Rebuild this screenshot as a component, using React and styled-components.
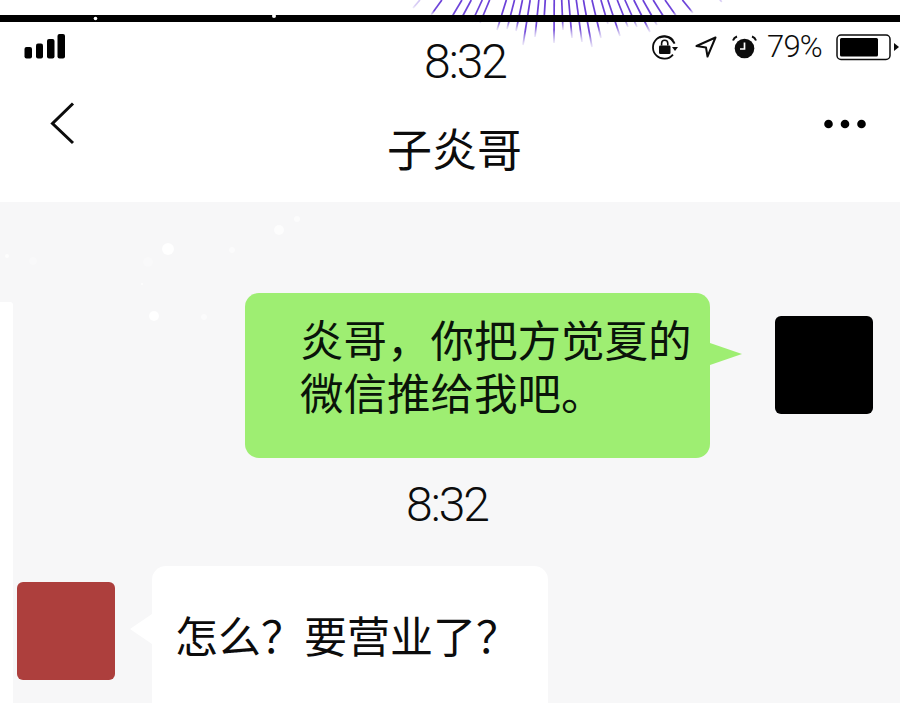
import React from "react";
import styled, { createGlobalStyle } from "styled-components";

const Global = createGlobalStyle`
  html, body { margin: 0; padding: 0; background: #fff; }
  #root { width: 900px; height: 703px; overflow: hidden; }
`;

const CJK = `"Noto Sans CJK SC", "Noto Sans", sans-serif`;
const LATIN = `Roboto, "Noto Sans", sans-serif`;

const Page = styled.div`
  position: relative;
  width: 900px;
  height: 703px;
  overflow: hidden;
  background: #fff;
  display: flex;
  flex-direction: column;
  color: #0c0c0c;
`;
const Rays = styled.svg`
  position: absolute;
  top: 0;
  left: 0;
  width: 900px;
  height: 60px;
`;
const TopGap = styled.div`height: 15px; flex: none;`;
const Bar = styled.div`
  position: relative;
  height: 7px;
  flex: none;
  background: #000;
`;
const BarSpecks = styled.svg`
  display: block;
  width: 900px;
  height: 7px;
  overflow: visible;
`;
const StatusBar = styled.header`
  position: relative;
  flex: none;
  height: 73px;
  padding-left: 24px;
  display: grid;
  grid-template-columns: 400px 228px 1fr;
  align-items: start;
`;
const Signal = styled.svg`
  display: block;
  width: 42px;
  height: 25px;
  margin-top: 12px;
`;
const Clock = styled.div`
  margin-top: 12px;
  font: 300 48px/56px ${LATIN};
  letter-spacing: -2px;
  white-space: nowrap;
`;
const Indicators = styled.div`
  display: flex;
  align-items: center;
  height: 28px;
  margin-top: 11px;
`;
const Indicator = styled.svg`
  display: block;
  flex: none;
  margin-left: ${(p) => p.$gap || 0}px;
`;
const Percent = styled.span`
  margin-left: 10px;
  font: 300 31px/28px ${LATIN};
  letter-spacing: -0.8px;
  white-space: nowrap;
`;
const NavBar = styled.nav`
  flex: none;
  height: 107px;
  padding-right: 34px;
  display: grid;
  grid-template-columns: 387px auto 1fr;
  align-items: start;
`;
const Back = styled.svg`
  display: block;
  width: 26px;
  height: 44px;
  margin: 6px 0 0 50px;
`;
const Title = styled.h1`
  margin: 26px 0 0;
  font: 400 45px/54px ${CJK};
  white-space: nowrap;
`;
const More = styled.svg`
  display: block;
  justify-self: end;
  width: 42px;
  height: 10px;
  margin-top: 24px;
`;
const Chat = styled.main`
  position: relative;
  flex: 1;
  min-height: 0;
  background: #f7f7f8;
  padding-top: 91px;
  display: flex;
  flex-direction: column;
`;
const Margin = styled.div`
  position: absolute;
  left: 0;
  top: 100px;
  bottom: 0;
  width: 13px;
  background: #fff;
  border-top-right-radius: 3px;
`;
const Specks = styled.svg`
  position: absolute;
  left: 0;
  top: 0;
  width: 320px;
  height: 140px;
`;
const OutRow = styled.div`
  display: flex;
  justify-content: flex-end;
  align-items: flex-start;
  padding-right: 27px;
  gap: 65px;
`;
const InRow = styled.div`
  display: flex;
  align-items: flex-start;
  padding-left: 17px;
  gap: 37px;
`;
const Avatar = styled.div`
  flex: none;
  width: 98px;
  height: 98px;
  margin-top: ${(p) => p.$top}px;
  border-radius: 6px;
  background: ${(p) => p.$color};
`;
const BubbleOut = styled.div`
  position: relative;
  box-sizing: border-box;
  width: 465px;
  height: 165px;
  padding: 19px 0 0 55px;
  border-radius: 14px;
  background: #9eee72;
  font: 400 43.5px/53px ${CJK};
  color: #0a140a;
  &::after {
    content: "";
    position: absolute;
    left: 100%;
    top: 50px;
    border-left: 32px solid #9eee72;
    border-top: 11px solid transparent;
    border-bottom: 11px solid transparent;
  }
`;
const BubbleLine = styled.div`
  white-space: nowrap;
`;
const BubbleIn = styled.div`
  position: relative;
  box-sizing: border-box;
  width: 396px;
  height: 160px;
  padding: 40px 0 0 23px;
  border-radius: 14px;
  background: #fff;
  font: 400 43px/56px ${CJK};
  white-space: nowrap;
  &::before {
    content: "";
    position: absolute;
    right: 100%;
    top: 48px;
    border-right: 22px solid #fff;
    border-top: 15px solid transparent;
    border-bottom: 15px solid transparent;
  }
`;
const Stamp = styled.div`
  margin: 19px 0 33px;
  padding-left: 406px;
  font: 300 48px/56px ${LATIN};
  letter-spacing: -2px;
`;

const rayEnds = [
  [413, 8], [431, 15], [450, 20], [460, 21], [472, 22], [480, 23], [497, 30], [507, 29],
  [516, 31], [523, 45], [535, 37], [544, 20], [554, 43], [563, 30], [572, 38], [582, 42],
  [592, 47], [601, 38], [608, 24], [620, 36], [628, 27], [637, 27], [650, 32], [657, 25],
  [667, 22], [677, 17], [693, 13], [722, 2],
];
const CX = 555;
const CY = -156;
const rays = rayEnds.map(([x, y]) => {
  const k = 1 - y / (y - CY);
  return { x, y, topX: CX + (x - CX) * k };
});

const specks = [
  [168, 47, 6, 0.9], [279, 28, 5, 0.7], [232, 48, 3, 0.5], [297, 17, 3, 0.6], [154, 114, 5, 0.9],
  [204, 115, 3, 0.5], [7, 54, 2, 0.7], [33, 59, 4, 0.25], [148, 60, 5, 0.25], [142, 82, 1, 0.8],
];

export default function App() {
  return (
    <Page>
      <Global />
      <Rays viewBox="0 0 900 60" aria-hidden="true">
        <defs>
          {rays.map((r, i) => (
            <linearGradient key={i} id={`ray${i}`} gradientUnits="userSpaceOnUse" x1={r.topX} y1="0" x2={r.x} y2={r.y}>
              <stop offset="0" stopColor="#6a3fd8" stopOpacity={r.y > 12 ? 1 : 0.3} />
              <stop offset="0.7" stopColor="#6a3fd8" stopOpacity={r.y > 12 ? 0.95 : 0.25} />
              <stop offset="1" stopColor="#8a70d8" stopOpacity="0.15" />
            </linearGradient>
          ))}
        </defs>
        {rays.map((r, i) => (
          <line key={i} x1={r.topX} y1="0" x2={r.x} y2={r.y} stroke={`url(#ray${i})`} strokeWidth="1.7" />
        ))}
      </Rays>
      <TopGap />
      <Bar>
        <BarSpecks viewBox="0 0 900 7" aria-hidden="true">
          <circle cx="95.5" cy="3.5" r="1.8" fill="#fff" />
          <circle cx="274" cy="1" r="2" fill="#fff" />
        </BarSpecks>
      </Bar>
      <StatusBar>
        <Signal viewBox="0 0 42 25" aria-hidden="true">
          <rect x="0.5" y="13" width="7.5" height="11.5" rx="2" />
          <rect x="12" y="9.5" width="7" height="15" rx="2" />
          <rect x="23" y="5" width="7.5" height="19.5" rx="2" />
          <rect x="33.5" y="0" width="7.5" height="24.5" rx="2" />
        </Signal>
        <Clock>8:32</Clock>
        <Indicators>
          <Indicator width="26" height="26" viewBox="0 0 26 26" aria-hidden="true">
            <path d="M21 6.2A11.3 11.3 0 1 0 21 20.6" fill="none" stroke="#0c0c0c" strokeWidth="1.8" />
            <path d="M7.5 3.6A11.3 11.3 0 0 1 22.6 9.6" fill="none" stroke="#0c0c0c" strokeWidth="1.8" />
            <path d="M20 13h6l-3 4z" fill="#0c0c0c" />
            <rect x="7" y="11.5" width="11.5" height="8.5" rx="1.2" fill="#0c0c0c" />
            <path d="M9.6 11.5V9.4a3.1 3.1 0 0 1 6.2 0v2.1" fill="none" stroke="#0c0c0c" strokeWidth="1.6" />
          </Indicator>
          <Indicator $gap={17} width="22" height="22" viewBox="0 0 22 22" aria-hidden="true">
            <path d="M20.5 1.5L1.5 10L11 11.5L12.5 20.5Z" fill="none" stroke="#0c0c0c" strokeWidth="2" strokeLinejoin="round" />
          </Indicator>
          <Indicator $gap={15} width="25" height="24" viewBox="0 0 25 24" aria-hidden="true">
            <circle cx="12.5" cy="13.5" r="9.8" fill="#0c0c0c" />
            <path d="M12.5 7.5V14H8" fill="none" stroke="#fff" strokeWidth="1.7" />
            <path d="M1 5.5Q2 2.5 5 1.5M24 5.5Q23 2.5 20 1.5" fill="none" stroke="#0c0c0c" strokeWidth="2" />
          </Indicator>
          <Percent>79%</Percent>
          <Indicator $gap={14} width="63" height="28" viewBox="0 0 63 28" aria-hidden="true">
            <rect x="1" y="2" width="53" height="24.5" rx="4" fill="none" stroke="#0c0c0c" strokeWidth="1.5" />
            <rect x="4" y="5" width="38" height="18.5" rx="1.5" fill="#000" />
            <path d="M58 10l5 4-5 4z" fill="#0c0c0c" />
          </Indicator>
        </Indicators>
      </StatusBar>
      <NavBar>
        <Back viewBox="0 0 26 44" aria-hidden="true">
          <path d="M23 2.5L2.5 22.5L23 42" fill="none" stroke="#0c0c0c" strokeWidth="3" />
        </Back>
        <Title>子炎哥</Title>
        <More viewBox="0 0 42 10" aria-hidden="true">
          <circle cx="4.5" cy="5" r="4.3" />
          <circle cx="21" cy="5" r="4.3" />
          <circle cx="37.5" cy="5" r="4.3" />
        </More>
      </NavBar>
      <Chat>
        <Specks viewBox="0 0 320 140" aria-hidden="true">
          {specks.map(([x, y, r, o], i) => (
            <circle key={i} cx={x} cy={y} r={r} fill="#fff" opacity={o} />
          ))}
        </Specks>
        <Margin />
        <OutRow>
          <BubbleOut>
            <BubbleLine>炎哥，你把方觉夏的</BubbleLine>
            <BubbleLine>微信推给我吧。</BubbleLine>
          </BubbleOut>
          <Avatar $top={23} $color="#000" />
        </OutRow>
        <Stamp>8:32</Stamp>
        <InRow>
          <Avatar $top={16} $color="#ad3f3d" />
          <BubbleIn>怎么？要营业了？</BubbleIn>
        </InRow>
      </Chat>
    </Page>
  );
}
